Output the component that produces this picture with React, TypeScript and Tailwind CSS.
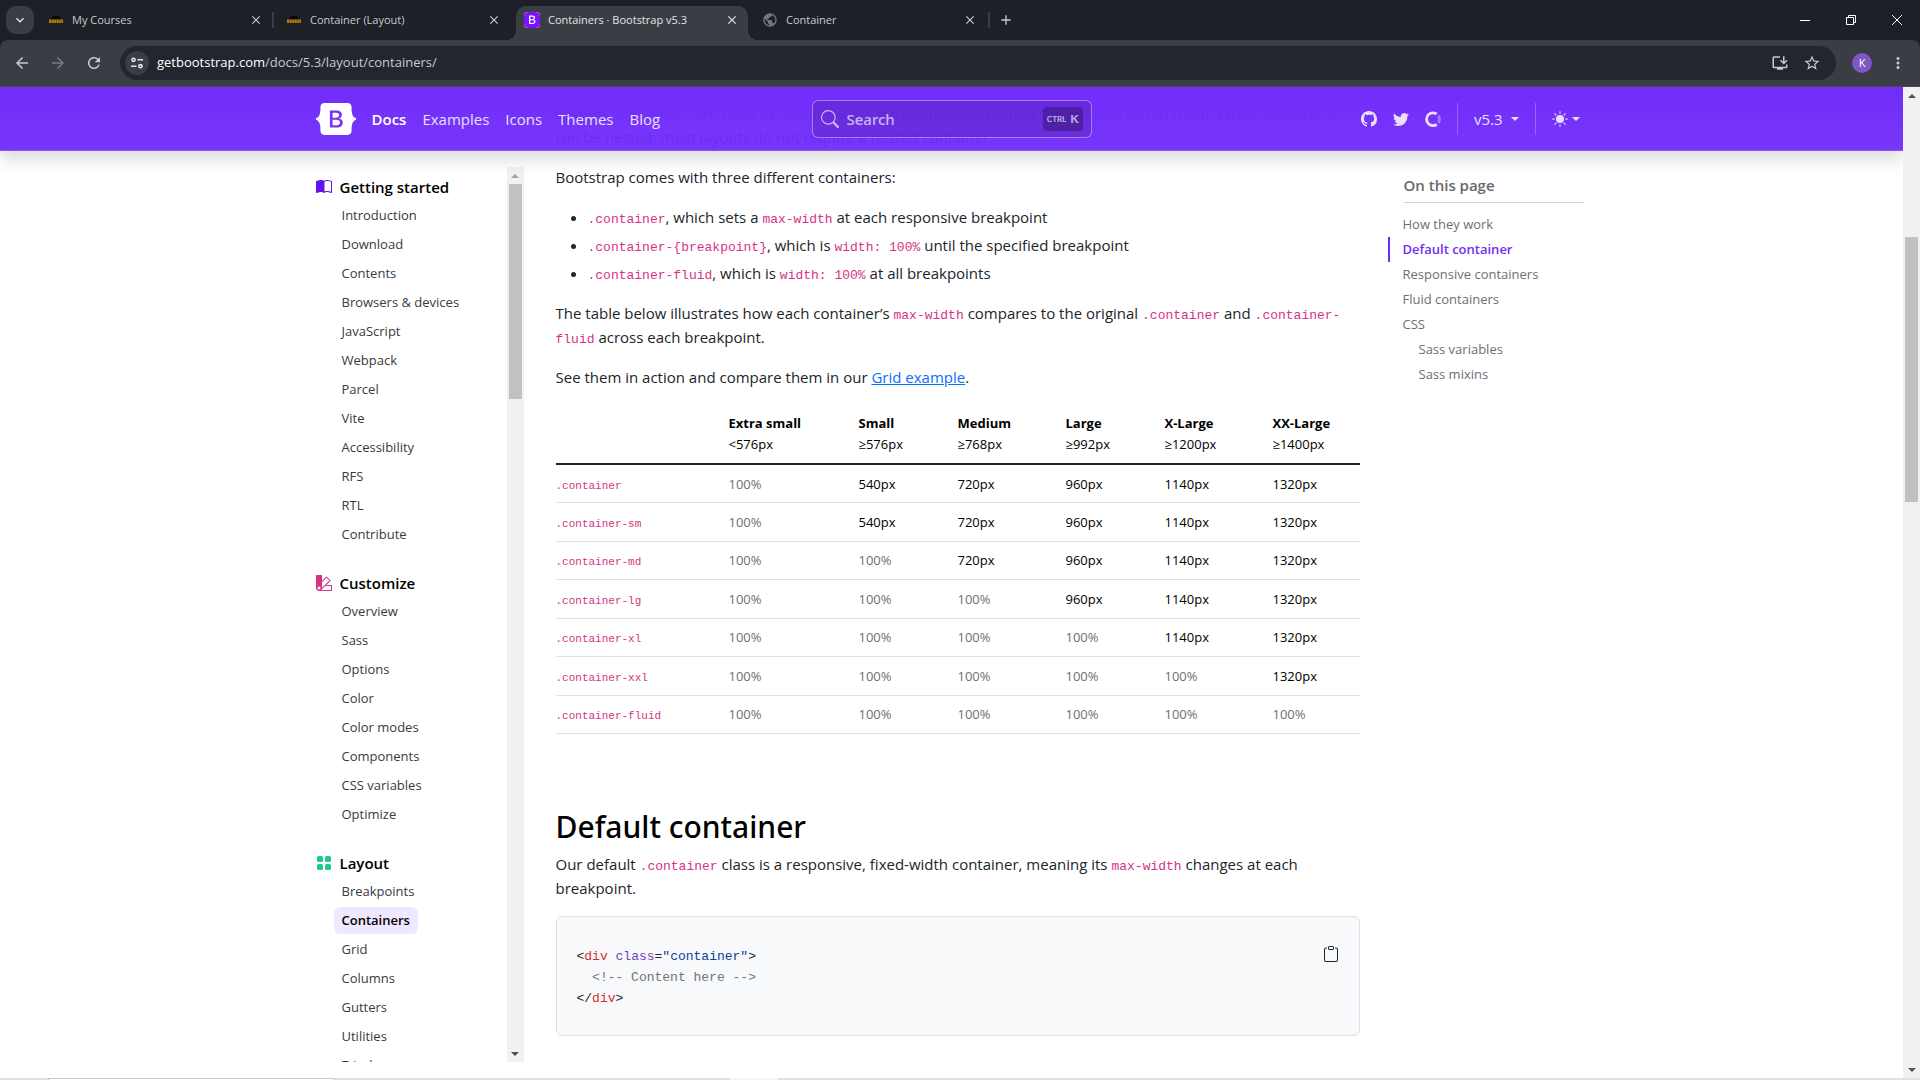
import React from "react";
import { SiBootstrap } from "react-icons/si";
import {
  BsBookHalf,
  BsBootstrapFill,
  BsClipboard,
  BsGithub,
  BsGridFill,
  BsPalette2,
  BsSearch,
  BsSunFill,
  BsTwitter,
} from "react-icons/bs";
import {
  MdAdd,
  MdArrowBack,
  MdArrowForward,
  MdClose,
  MdInstallDesktop,
  MdKeyboardArrowDown,
  MdMoreVert,
  MdPublic,
  MdRefresh,
  MdStarBorder,
} from "react-icons/md";

const sections = [
  {
    title: "Getting started",
    icon: <BsBookHalf className="size-4 text-[#6610f2]" />,
    links: ["Introduction", "Download", "Contents", "Browsers & devices", "JavaScript", "Webpack", "Parcel", "Vite", "Accessibility", "RFS", "RTL", "Contribute"],
  },
  {
    title: "Customize",
    icon: <BsPalette2 className="size-4 text-[#d63384]" />,
    links: ["Overview", "Sass", "Options", "Color", "Color modes", "Components", "CSS variables", "Optimize"],
  },
  {
    title: "Layout",
    icon: <BsGridFill className="size-4 text-[#20c997]" />,
    links: ["Breakpoints", "Containers", "Grid", "Columns", "Gutters", "Utilities", "Z-index"],
  },
];

const columns = [
  { name: "Extra small", size: "<576px", width: "w-[130px]" },
  { name: "Small", size: "≥576px", width: "w-[99px]" },
  { name: "Medium", size: "≥768px", width: "w-[108px]" },
  { name: "Large", size: "≥992px", width: "w-[99px]" },
  { name: "X-Large", size: "≥1200px", width: "w-[108px]" },
  { name: "XX-Large", size: "≥1400px", width: "w-[95px]" },
];

const rows = [
  { name: ".container", values: ["100%", "540px", "720px", "960px", "1140px", "1320px"] },
  { name: ".container-sm", values: ["100%", "540px", "720px", "960px", "1140px", "1320px"] },
  { name: ".container-md", values: ["100%", "100%", "720px", "960px", "1140px", "1320px"] },
  { name: ".container-lg", values: ["100%", "100%", "100%", "960px", "1140px", "1320px"] },
  { name: ".container-xl", values: ["100%", "100%", "100%", "100%", "1140px", "1320px"] },
  { name: ".container-xxl", values: ["100%", "100%", "100%", "100%", "100%", "1320px"] },
  { name: ".container-fluid", values: ["100%", "100%", "100%", "100%", "100%", "100%"] },
];

const toc = [
  { label: "How they work" },
  { label: "Default container", active: true },
  { label: "Responsive containers" },
  { label: "Fluid containers" },
  { label: "CSS" },
  { label: "Sass variables", nested: true },
  { label: "Sass mixins", nested: true },
];

function Code({ children }: { children: React.ReactNode }) {
  return <code className="font-['Liberation_Mono',monospace] text-[13px] leading-none text-[#d63384]">{children}</code>;
}

function CourseIcon() {
  return (
    <svg viewBox="0 0 16 16" className="size-4" aria-hidden="true">
      <path d="M3 7.500 4 5l2-1h4l2 1 1 2.500z" fill="#08090a" />
      <path d="M1 7.500h14v3.500H1z" fill="#b87a0e" />
      <path d="M3.500 7.500v3.500M6 7.500v3.500M8.500 7.500v3.500M11 7.500v3.500M13.200 7.500v3.500" stroke="#4a330c" strokeWidth="0.6" />
    </svg>
  );
}

function Tab({ icon, title, active }: { icon: React.ReactNode; title: string; active?: boolean }) {
  return (
    <div
      className={
        active
          ? "relative mt-1.5 flex h-[34px] w-[232px] items-center rounded-t-[10px] bg-[#3b3d45] pb-1.5 pl-2 pr-2 text-[#e3e3e3]"
          : "mt-1.5 flex h-[34px] w-[232px] items-center pb-1.5 pl-2 pr-2 text-[#c7cacf]"
      }
    >
      {active && (
        <>
          <span className="absolute -left-2.5 bottom-0 size-2.5 bg-[radial-gradient(circle_at_0_0,transparent_10px,#3b3d45_10px)]" />
          <span className="absolute -right-2.5 bottom-0 size-2.5 bg-[radial-gradient(circle_at_100%_0,transparent_10px,#3b3d45_10px)]" />
        </>
      )}
      <span className="flex size-4 items-center justify-center">{icon}</span>
      <span className="ml-2 flex-1 truncate text-[11px]">{title}</span>
      <button aria-label={`Close ${title}`} className="flex size-4 items-center justify-center">
        <MdClose className="size-3.5" />
      </button>
    </div>
  );
}

function BrowserChrome() {
  return (
    <div className="shrink-0">
      <div className="flex h-10 bg-[#1d2027]">
        <button aria-label="Search tabs" className="ml-1.5 mt-1.5 flex size-7 items-center justify-center rounded-[10px] bg-[#3b3d45] text-[#e3e3e3]">
          <MdKeyboardArrowDown className="size-4" />
        </button>
        <div className="ml-1.5 flex">
          <Tab icon={<CourseIcon />} title="My Courses" />
          <span className="mr-1 mt-3 h-4 w-0.5 bg-[#3b3d45]" />
          <Tab icon={<CourseIcon />} title="Container (Layout)" />
          <span className="w-1.5" />
          <Tab icon={<BsBootstrapFill className="size-4 rounded-sm bg-white text-[#7d12f9]" />} title="Containers · Bootstrap v5.3" active />
          <span className="w-1.5" />
          <Tab icon={<MdPublic className="size-4 text-[#74777b]" />} title="Container" />
          <span className="ml-0.5 mt-3 h-4 w-0.5 bg-[#3b3d45]" />
        </div>
        <button aria-label="New tab" className="ml-2 mt-1.5 flex h-7 items-center text-[#c7cacf]">
          <MdAdd className="size-4" />
        </button>
        <div className="ml-auto flex items-center text-white">
          <button aria-label="Minimize" className="flex w-[46px] justify-center">
            <svg viewBox="0 0 10 10" className="size-2.5" fill="none" stroke="currentColor"><path d="M0 5.5h10" /></svg>
          </button>
          <button aria-label="Restore" className="flex w-[46px] justify-center">
            <svg viewBox="0 0 10 10" className="size-2.5" fill="none" stroke="currentColor"><path d="M.5 2.5h7v7h-7zM2.5 2.5v-2h7v7h-2" /></svg>
          </button>
          <button aria-label="Close" className="flex w-[46px] justify-center">
            <svg viewBox="0 0 10 10" className="size-2.5" fill="none" stroke="currentColor"><path d="M0 0l10 10M10 0 0 10" /></svg>
          </button>
        </div>
      </div>
      <div className="bg-[#1d2027]">
        <div className="flex h-[47px] items-center rounded-t-lg border-b border-[#4a4c54] bg-[#3b3d45] pl-3 text-[#c7cacf]">
          <button aria-label="Back" className="flex w-5 justify-center"><MdArrowBack className="size-[18px]" /></button>
          <button aria-label="Forward" className="ml-4 flex w-5 justify-center text-[#7a7c82]"><MdArrowForward className="size-[18px]" /></button>
          <button aria-label="Reload" className="ml-4 flex w-5 justify-center"><MdRefresh className="size-[18px]" /></button>
          <div className="ml-4 flex h-[34px] flex-1 items-center rounded-full bg-[#23262e] pl-[5px] pr-3.5">
            <button aria-label="Site information" className="flex size-6 items-center justify-center rounded-full bg-[#3b3d45]">
              <svg viewBox="0 0 14 14" className="size-3.5" fill="none" stroke="#e3e3e3" strokeWidth="1.6">
                <circle cx="3.5" cy="3.8" r="1.6" />
                <path d="M7.5 3.8H13M1 10.2h5.500" />
                <circle cx="10.500" cy="10.200" r="1.600" />
              </svg>
            </button>
            <div className="ml-2 flex flex-1 items-center text-[13px]">
              <span className="text-white">getbootstrap.com</span>
              <input aria-label="Address" className="w-full bg-transparent text-[#c7cacf] outline-none" defaultValue="/docs/5.3/layout/containers/" />
            </div>
            <button aria-label="Install app" className="flex w-5 justify-center"><MdInstallDesktop className="size-[18px]" /></button>
            <button aria-label="Bookmark" className="ml-3 flex w-5 justify-center"><MdStarBorder className="size-[18px]" /></button>
          </div>
          <button aria-label="Profile" className="ml-4 flex size-5 items-center justify-center rounded-full bg-[#7e57c2] text-[11px] text-white">K</button>
          <button aria-label="Menu" className="ml-4 mr-3 flex w-5 justify-center"><MdMoreVert className="size-[18px]" /></button>
        </div>
      </div>
    </div>
  );
}

function Caret() {
  return <span className="border-x-4 border-t-4 border-x-transparent border-t-current" />;
}

function Header() {
  return (
    <header className="relative z-10 h-16 shrink-0 bg-linear-to-b from-[#712cf9] to-[#712cf9f2] shadow-[0_8px_16px_rgba(0,0,0,0.15),inset_0_-1px_0_rgba(255,255,255,0.15)]">
      <div className="mx-auto grid h-full max-w-[1320px] grid-cols-[1fr_280px_1fr] items-center px-6 text-white/85">
        <nav className="flex items-center gap-4 text-[15px]">
          <a href="#home" aria-label="Bootstrap" className="text-white"><SiBootstrap className="size-10" /></a>
          <a href="#docs" className="font-semibold text-white">Docs</a>
          <a href="#examples">Examples</a>
          <a href="#icons">Icons</a>
          <a href="#themes">Themes</a>
          <a href="#blog">Blog</a>
        </nav>
        <button className="flex h-[38px] items-center rounded-md border border-white/40 bg-black/10 px-2 text-white/65">
          <BsSearch className="size-[18px]" />
          <span className="ml-2 font-['Noto_Sans',sans-serif] text-[15px] font-medium">Search</span>
          <kbd className="ml-auto flex h-6 items-center gap-1 rounded-sm bg-black/25 px-1 font-[Lato,sans-serif]">
            <span className="text-[8px] font-bold">CTRL</span>
            <span className="text-[12px] font-bold">K</span>
          </kbd>
        </button>
        <div className="flex items-center justify-end pr-2 text-[15px]">
          <a href="#github" aria-label="GitHub"><BsGithub className="size-4" /></a>
          <a href="#twitter" aria-label="Twitter" className="ml-4"><BsTwitter className="size-4" /></a>
          <a href="#collective" aria-label="Open Collective" className="ml-4">
            <svg viewBox="0 0 40 41" className="size-4" fill="currentColor" fillRule="evenodd">
              <path fillOpacity=".4" d="M32.800 21c0 2.400-.8 4.900-2 6.900l5.100 5.100c2.500-3.400 4.100-7.600 4.100-12 0-4.600-1.600-8.800-4-12.200L30.700 14c1.200 2 2 4.300 2 7z" />
              <path d="M20 33.700a12.800 12.800 0 0 1 0-25.600c2.600 0 5 .7 7 2.100L32 5a20 20 0 1 0 .1 31.900l-5-5.200a13 13 0 0 1-7 2z" />
            </svg>
          </a>
          <span className="mx-4 h-8 w-px bg-white/25" />
          <button className="flex items-center gap-2">v5.3 <Caret /></button>
          <span className="mx-4 h-8 w-px bg-white/25" />
          <button aria-label="Toggle theme" className="flex items-center gap-1"><BsSunFill className="size-4" /><Caret /></button>
        </div>
      </div>
    </header>
  );
}

function Sidebar() {
  return (
    <aside className="mb-4 mt-20 flex w-[208px] overflow-hidden">
      <nav aria-label="Docs navigation" className="flex-1 pt-2">
        {sections.map((s) => (
          <section key={s.title} className="mb-[22px]">
            <h2 className="mb-0.5 flex h-6 items-center gap-2 text-[15px] font-semibold text-black">
              {s.icon}
              {s.title}
            </h2>
            <ul className="pl-[18px]">
              {s.links.map((l) => (
                <li key={l} className="flex h-[29px] items-center">
                  <a
                    href="#link"
                    className={
                      l === "Containers"
                        ? "flex h-[27px] items-center rounded-md bg-[#f0e8fe] px-2 text-[13px] font-semibold text-black"
                        : "flex h-[27px] items-center px-2 text-[13px] text-[#373b3f]"
                    }
                  >
                    {l}
                  </a>
                </li>
              ))}
            </ul>
          </section>
        ))}
      </nav>
      <div className="flex w-[17px] flex-col items-center bg-[#f1f1f1]">
        <span className="mt-[7px] border-x-4 border-b-4 border-x-transparent border-b-[#a3a3a3]" />
        <span className="mt-1.5 h-[215px] w-[13px] bg-[#c1c1c1]" />
        <span className="mb-1.5 mt-auto border-x-4 border-t-4 border-x-transparent border-t-[#505050]" />
      </div>
    </aside>
  );
}

function ContainerTable() {
  return (
    <table className="mt-4 h-[329px] w-full table-fixed border-collapse text-left text-[13px] text-black">
      <thead>
        <tr className="border-b-2 border-[#212529]">
          <th className="w-[165px]" />
          {columns.map((c) => (
            <th key={c.name} scope="col" className={`${c.width} px-2 py-2 font-bold leading-[21px]`}>
              {c.name}
              <br />
              <span className="font-normal">{c.size}</span>
            </th>
          ))}
        </tr>
      </thead>
      <tbody>
        {rows.map((r) => (
          <tr key={r.name} className="h-[38px] border-b border-[#dee2e6]">
            <th scope="row" className="font-normal">
              <code className="font-['Liberation_Mono',monospace] text-[11px] leading-none text-[#d63384]">{r.name}</code>
            </th>
            {r.values.map((v, i) => (
              <td key={i} className={v === "100%" ? "px-2 text-[#6c7074]" : "px-2"}>{v}</td>
            ))}
          </tr>
        ))}
      </tbody>
    </table>
  );
}

function Article() {
  return (
    <main className="ml-8 min-w-0 flex-1 pt-3.5 text-[15px] leading-6 text-[#212529]">
      <p className="whitespace-nowrap">
        <strong className="font-semibold">system</strong>. Containers are used to contain, pad, and (sometimes) center the content within them. While containers
        <br />
        <em>can</em> be nested, most layouts do not require a nested container.
      </p>
      <p className="mt-4">Bootstrap comes with three different containers:</p>
      <ul className="mt-4 list-disc space-y-1 pl-8">
        <li><Code>.container</Code>, which sets a <Code>max-width</Code> at each responsive breakpoint</li>
        <li><Code>.container-{"{breakpoint}"}</Code>, which is <Code>width: 100%</Code> until the specified breakpoint</li>
        <li><Code>.container-fluid</Code>, which is <Code>width: 100%</Code> at all breakpoints</li>
      </ul>
      <p className="mt-4">
        The table below illustrates how each container’s <Code>max-width</Code> compares to the original <Code>.container</Code> and <Code>.container-fluid</Code> across each breakpoint.
      </p>
      <p className="mt-4">
        See them in action and compare them in our <a href="#grid" className="text-[#0d6efd] underline">Grid example</a>.
      </p>
      <ContainerTable />
      <h2 className="mt-[74px] font-['Noto_Sans',sans-serif] text-[30px] font-medium leading-[38px] text-black">Default container</h2>
      <p className="mt-1.5">
        Our default <Code>.container</Code> class is a responsive, fixed-width container, meaning its <Code>max-width</Code> changes at each breakpoint.
      </p>
      <div className="mt-4 flex items-start justify-between rounded-md border border-[#dee2e6] bg-[#f8f9fa] px-5 pb-[26px] pt-[29px]">
        <pre className="font-['Liberation_Mono',monospace] text-[13px] leading-[21px]">
          <span className="text-[#24292f]">&lt;</span><span className="text-[#d32f2f]">div</span> <span className="text-[#6f42c1]">class</span>=<span className="text-[#084298]">"container"</span>&gt;{"\n"}
          <span className="text-[#6c757d]">{"  <!-- Content here -->"}</span>{"\n"}
          &lt;/<span className="text-[#d32f2f]">div</span>&gt;
        </pre>
        <button aria-label="Copy to clipboard"><BsClipboard className="size-4" /></button>
      </div>
    </main>
  );
}

function Toc() {
  return (
    <nav aria-label="On this page" className="ml-7 w-[200px] pr-1 pt-[86px]">
      <h2 className="ml-4 border-b border-[#ced0d3] pb-[5px] text-[15px] font-semibold leading-6 text-[#65696d]">On this page</h2>
      <ul className="mt-[9px] text-[13px] text-[#6c7074]">
        {toc.map((t) => (
          <li key={t.label} className={t.nested ? "pl-4" : ""}>
            <a
              href="#toc"
              className={
                t.active
                  ? "flex h-[25px] items-center border-l-2 border-[#712cf9] pl-[13px] font-semibold text-[#712cf9]"
                  : "flex h-[25px] items-center pl-[15px]"
              }
            >
              {t.label}
            </a>
          </li>
        ))}
      </ul>
    </nav>
  );
}

export default function App() {
  return (
    <div className="flex h-screen flex-col overflow-hidden bg-white font-['Open_Sans',sans-serif]">
      <BrowserChrome />
      <div className="flex min-h-0 flex-1">
        <div className="flex min-h-0 min-w-0 flex-1 flex-col overflow-hidden">
          <Header />
          <div className="mx-auto -mt-16 flex min-h-0 w-full max-w-[1320px] flex-1 px-6">
            <Sidebar />
            <Article />
            <Toc />
          </div>
        </div>
        <div className="flex w-[17px] flex-col items-center bg-[#f1f1f1]">
          <span className="mt-[7px] border-x-4 border-b-4 border-x-transparent border-b-[#505050]" />
          <span className="mt-[139px] h-[265px] w-[13px] bg-[#c1c1c1]" />
          <span className="mb-1.5 mt-auto border-x-4 border-t-4 border-x-transparent border-t-[#505050]" />
        </div>
      </div>
      <div className="flex h-0.5 shrink-0 bg-[#e1e1e1]">
        <span className="ml-12 w-[287px] border-x border-t border-[#c8c8c8] bg-white" />
        <span className="ml-[395px] w-12 bg-[#f5f5f5]" />
      </div>
    </div>
  );
}
